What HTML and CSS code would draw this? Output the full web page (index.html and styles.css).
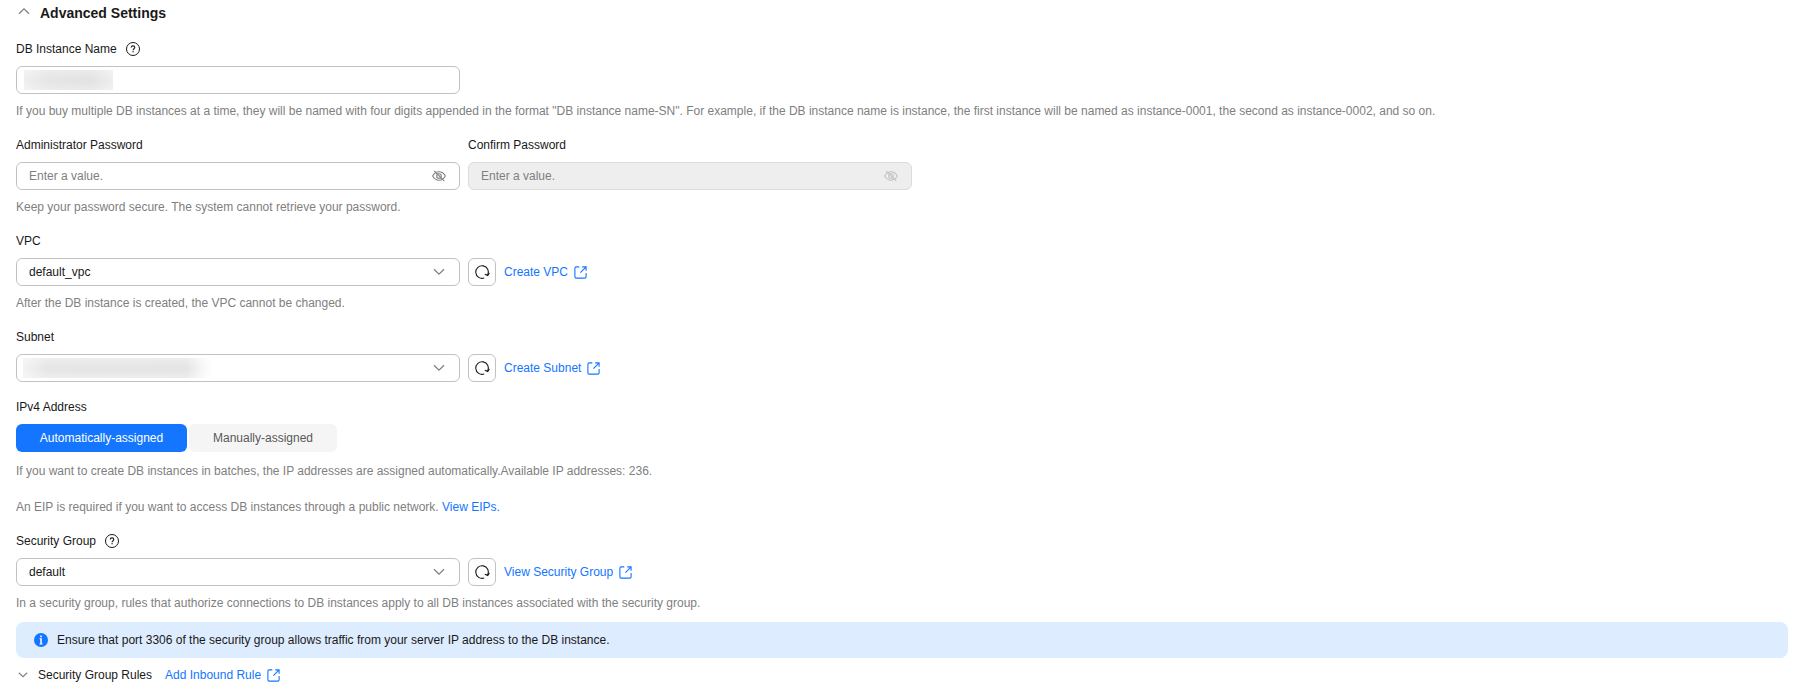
FILE: index.html
```html
<!DOCTYPE html>
<html lang="en">
<head>
  <meta charset="UTF-8">
  <title>Advanced Settings</title>
  <link rel="stylesheet" href="styles.css">
</head>
<body>

  <!-- shared icons -->
  <svg class="sprite">
    <symbol id="help" viewBox="0 0 14 14">
      <circle cx="7" cy="7" r="6.5" fill="none" stroke="currentColor" stroke-width="1"/>
      <path d="M5.2 5.6c0-1.1.8-1.7 1.8-1.7s1.8.6 1.8 1.6c0 1.2-1.7 1.3-1.7 2.7" fill="none" stroke="currentColor" stroke-width="1.1"/>
      <rect x="6.5" y="9.1" width="1.2" height="1.2" fill="currentColor"/>
    </symbol>
    <symbol id="arrow" viewBox="0 0 12 8">
      <path d="M1 1.3l5 4.8 5-4.8" fill="none" stroke="currentColor" stroke-width="1.3"/>
    </symbol>
    <symbol id="eye" viewBox="0 0 14 12">
      <path d="M.6 6C2.2 3.3 4.4 1.8 7 1.8S11.8 3.3 13.4 6C11.8 8.7 9.6 10.2 7 10.2S2.2 8.7.6 6z" fill="none" stroke="currentColor" stroke-width="1.1"/>
      <circle cx="7" cy="6" r="2.3" fill="none" stroke="currentColor" stroke-width="1.1"/>
      <path d="M2.2.8l10.2 10.4" fill="none" stroke="currentColor" stroke-width="1.1"/>
    </symbol>
    <symbol id="refresh" viewBox="0 0 16 16">
      <path d="M10.2 14A6.3 6.3 0 1 1 13.7 10.9" fill="none" stroke="currentColor" stroke-width="1.1"/>
      <path d="M10.800 10.200l2.900 1.200 1.600-2.500" fill="none" stroke="currentColor" stroke-width="1.2"/>
    </symbol>
    <symbol id="external" viewBox="0 0 13 13">
      <path d="M5.3.9H2.2Q.9.9.9 2.2v8.6Q.9 12.1 2.2 12.1h8.6q1.3 0 1.3-1.3V7M8.2.9h3.9v3.9M12.1.9L6.4 6.6" fill="none" stroke="currentColor" stroke-width="1.1"/>
    </symbol>
  </svg>

  <div class="page">
    <div class="section-title">
      <svg class="arrow up"><use href="#arrow"/></svg>
      <h2>Advanced Settings</h2>
    </div>

    <div class="field">
      <label>DB Instance Name <svg class="help-icon"><use href="#help"/></svg></label>
      <div class="input"><span class="mask mask-name"></span></div>
      <p class="tip">If you buy multiple DB instances at a time, they will be named with four digits appended in the format "DB instance name-SN". For example, if the DB instance name is instance, the first instance will be named as instance-0001, the second as instance-0002, and so on.</p>
    </div>

    <div class="field">
      <div class="row">
        <div>
          <label>Administrator Password</label>
          <div class="input placeholder">Enter a value. <svg class="eye"><use href="#eye"/></svg></div>
        </div>
        <div>
          <label>Confirm Password</label>
          <div class="input placeholder disabled">Enter a value. <svg class="eye"><use href="#eye"/></svg></div>
        </div>
      </div>
      <p class="tip">Keep your password secure. The system cannot retrieve your password.</p>
    </div>

    <div class="field">
      <label>VPC</label>
      <div class="row">
        <div class="input">default_vpc <svg class="arrow"><use href="#arrow"/></svg></div>
        <button type="button" class="refresh-btn"><svg><use href="#refresh"/></svg></button>
        <a class="link">Create VPC <svg><use href="#external"/></svg></a>
      </div>
      <p class="tip">After the DB instance is created, the VPC cannot be changed.</p>
    </div>

    <div class="field">
      <label>Subnet</label>
      <div class="row">
        <div class="input"><span class="mask mask-subnet"></span> <svg class="arrow"><use href="#arrow"/></svg></div>
        <button type="button" class="refresh-btn"><svg><use href="#refresh"/></svg></button>
        <a class="link">Create Subnet <svg><use href="#external"/></svg></a>
      </div>
    </div>

    <div class="field">
      <label>IPv4 Address</label>
      <div class="tabs">
        <button type="button" class="tab-auto active">Automatically-assigned</button>
        <button type="button" class="tab-manual">Manually-assigned</button>
      </div>
      <p class="tip ip-tip">If you want to create DB instances in batches, the IP addresses are assigned automatically.Available IP addresses: 236.</p>
      <p class="tip eip-tip">An EIP is required if you want to access DB instances through a public network. <a>View EIPs.</a></p>
    </div>

    <div class="field">
      <label>Security Group <svg class="help-icon"><use href="#help"/></svg></label>
      <div class="row">
        <div class="input">default <svg class="arrow"><use href="#arrow"/></svg></div>
        <button type="button" class="refresh-btn"><svg><use href="#refresh"/></svg></button>
        <a class="link">View Security Group <svg><use href="#external"/></svg></a>
      </div>
      <p class="tip">In a security group, rules that authorize connections to DB instances apply to all DB instances associated with the security group.</p>
      <div class="alert">
        <svg class="info" viewBox="0 0 14 14">
          <circle cx="7" cy="7" r="7" fill="#1476ff"/>
          <path d="M6.2 2.6h1.6v1.6H6.2zM5.6 5.2h2.2v5.2h.8v1H5.5v-1h.8V6.2h-.7z" fill="#fff"/>
        </svg>
        <span>Ensure that port 3306 of the security group allows traffic from your server IP address to the DB instance.</span>
      </div>
      <div class="rules">
        <svg class="arrow"><use href="#arrow"/></svg>
        <span>Security Group Rules</span>
        <a class="link">Add Inbound Rule <svg><use href="#external"/></svg></a>
      </div>
    </div>
  </div>

</body>
</html>
```

FILE: styles.css
```css
body {
  margin: 0;
  background: #fff;
  color: #191919;
  font: 12px/18px "Liberation Sans", Arial, sans-serif;
}
h2, p {
  margin: 0;
}
svg {
  display: block;
  flex: none;
}
.sprite {
  display: none;
}
a {
  color: #1476ff;
  cursor: pointer;
}
button {
  font: inherit;
  border: none;
  padding: 0;
  cursor: pointer;
}

.page {
  padding: 3px 12px 0 16px;
}

.section-title {
  display: flex;
  height: 20px;
  margin-bottom: 17px;
}
.section-title h2 {
  margin-left: 10px;
  font-size: 14px;
  line-height: 20px;
}
.section-title .arrow {
  margin: 4px 0 0 2px;
}

.arrow {
  width: 12px;
  height: 8px;
  color: #808080;
}
.arrow.up {
  transform: rotate(180deg);
}

.field {
  margin-bottom: 16px;
}
.field label {
  display: flex;
  align-items: center;
  height: 18px;
  margin-bottom: 8px;
}
.help-icon {
  width: 14px;
  height: 14px;
  margin-left: 9px;
}

.row {
  display: flex;
  align-items: center;
  gap: 8px;
}
.input {
  display: flex;
  align-items: center;
  justify-content: space-between;
  box-sizing: border-box;
  width: 444px;
  height: 28px;
  padding: 0 14px 0 12px;
  border: 1px solid #c2c2c2;
  border-radius: 6px;
}
.placeholder {
  color: #808080;
}
.input.disabled {
  background: #eee;
  border-color: #dbdbdb;
}
.eye {
  width: 14px;
  height: 12px;
  margin-right: -1px;
}
.disabled .eye {
  color: #c2c2c2;
}

/* masked values */
.mask {
  height: 20px;
  margin-left: -5px;
}
.mask-name {
  width: 89px;
  background:
    linear-gradient(rgba(255,255,255,0.25), rgba(255,255,255,0) 45%, rgba(255,255,255,0) 60%, rgba(255,255,255,0.25)),
    linear-gradient(90deg, #f0f0f0, #e6e6e6 25%, #e3e3e3 75%, #eee);
}
.mask-subnet {
  width: 190px;
  margin-left: -6px;
  background:
    linear-gradient(rgba(255,255,255,0.3), rgba(255,255,255,0) 45%, rgba(255,255,255,0) 60%, rgba(255,255,255,0.3)),
    linear-gradient(90deg, #f3f3f3, #e6e6e6 13%, #e5e5e5 86%, #f8f8f8 95%, #fff);
}

.refresh-btn {
  display: flex;
  align-items: center;
  justify-content: center;
  width: 28px;
  height: 28px;
  border: 1px solid #c2c2c2;
  border-radius: 6px;
  background: #fff;
  color: #191919;
}
.refresh-btn svg {
  width: 16px;
  height: 16px;
}

.link {
  display: flex;
  align-items: center;
}
.link svg {
  width: 13px;
  height: 13px;
  margin-left: 6px;
}

.tip {
  margin-top: 8px;
  color: #808080;
  white-space: nowrap;
}
.ip-tip {
  margin-top: 10px;
}
.eip-tip {
  margin-top: 18px;
}

.tabs {
  display: flex;
  gap: 2px;
}
.tabs button {
  height: 28px;
  border-radius: 6px;
  background: #f5f5f5;
  color: #595959;
}
.tabs .active {
  background: #1476ff;
  color: #fff;
}
.tab-auto {
  width: 171px;
}
.tab-manual {
  width: 148px;
}

.alert {
  display: flex;
  align-items: center;
  height: 36px;
  margin-top: 10px;
  padding-left: 18px;
  border-radius: 8px;
  background: #deecff;
}
.info {
  width: 14px;
  height: 14px;
  margin-right: 9px;
}

.rules {
  display: flex;
  align-items: center;
  height: 18px;
  margin-top: 8px;
}
.rules .arrow {
  width: 10px;
  margin: 0 10px 0 2px;
}
.rules .link {
  margin-left: 13px;
}
```
